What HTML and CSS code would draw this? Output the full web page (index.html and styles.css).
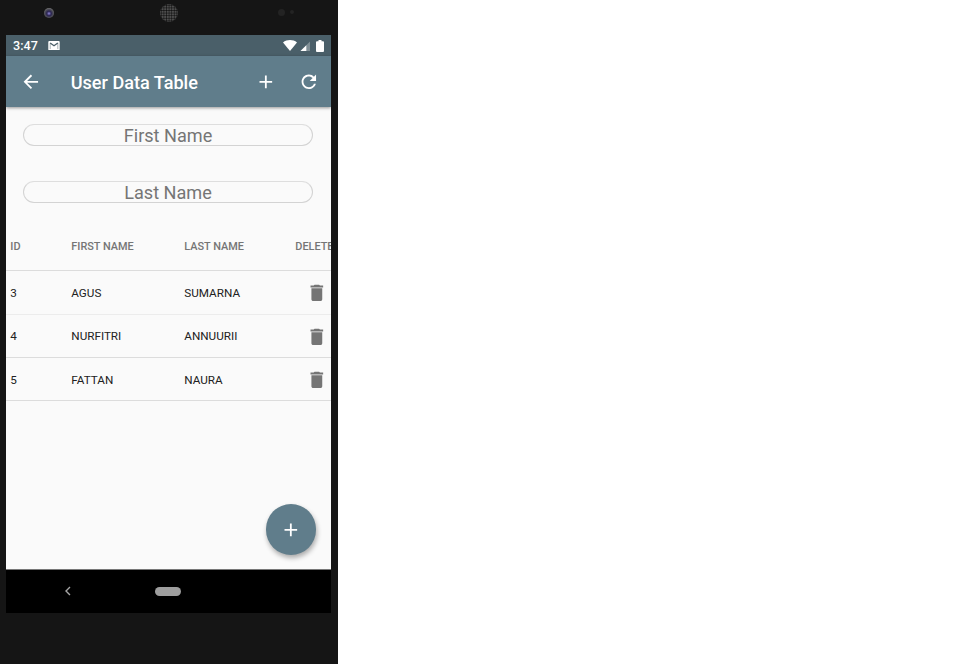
FILE: index.html
```html
<!DOCTYPE html>
<html lang="en">
<head>
<meta charset="utf-8">
<title>User Data Table</title>
<link rel="stylesheet" href="styles.css">
</head>
<body>
<div class="phone">
  <div class="bezel-top">
    <span class="camera"></span>
    <span class="speaker"></span>
    <span class="sensors"><i></i><i></i></span>
  </div>
  <div class="screen">
    <div class="status">
      <span class="time">3:47</span>
      <svg class="mail" viewBox="0 0 12 10"><path fill="#fff" d="M1 0h10a1 1 0 0 1 1 1v8a1 1 0 0 1-1 1H1a1 1 0 0 1-1-1V1a1 1 0 0 1 1-1z"/><path d="M2 2l4 3 4-3" fill="none" stroke="#4a5f69" stroke-width="1.300"/><path d="M2 2v6.500M10 2v6.500" fill="none" stroke="#4a5f69" stroke-width=".5"/></svg>
      <svg class="wifi" viewBox="0 0 14 11"><path fill="#fff" d="M0 2.400C4-.8 10-.8 14 2.400L7 11z"/></svg>
      <svg class="signal" viewBox="0 0 10 10"><path fill="#fff" fill-opacity=".3" d="M0 10 10 0v10z"/><path fill="#fff" d="M0 10 6 4v6z"/></svg>
      <svg class="battery" viewBox="0 0 8 12"><path fill="#fff" d="M2.500 0h3v1.200H7a1 1 0 0 1 1 1V11a1 1 0 0 1-1 1H1a1 1 0 0 1-1-1V2.200a1 1 0 0 1 1-1h1.500z"/></svg>
    </div>
    <header class="appbar">
      <svg class="icon" viewBox="0 0 24 24"><path d="M20 11H7.830l5.590-5.590L12 4l-8 8 8 8 1.410-1.410L7.830 13H20v-2z"/></svg>
      <h1>User Data Table</h1>
      <svg class="icon add" viewBox="0 0 24 24"><path d="M19 13h-6v6h-2v-6H5v-2h6V5h2v6h6v2z"/></svg>
      <svg class="icon" viewBox="0 0 24 24"><path d="M17.650 6.350C16.200 4.900 14.210 4 12 4c-4.420 0-7.990 3.580-7.990 8s3.570 8 7.990 8c3.730 0 6.840-2.550 7.730-6h-2.080c-.82 2.330-3.040 4-5.650 4-3.310 0-6-2.690-6-6s2.690-6 6-6c1.660 0 3.140.69 4.220 1.780L13 11h7V4l-2.350 2.350z"/></svg>
    </header>
    <main>
      <div class="field">First Name</div>
      <div class="field">Last Name</div>
      <div class="table">
        <div class="row head"><span>ID</span><span>FIRST NAME</span><span>LAST NAME</span><span>DELETE</span></div>
        <div class="row light"><span>3</span><span>AGUS</span><span>SUMARNA</span><svg class="trash" viewBox="0 0 24 24"><path d="M6 19c0 1.100.9 2 2 2h8c1.100 0 2-.9 2-2V7H6v12zM19 4h-3.500l-1-1h-5l-1 1H5v2h14V4z"/></svg></div>
        <div class="row"><span>4</span><span>NURFITRI</span><span>ANNUURII</span><svg class="trash" viewBox="0 0 24 24"><path d="M6 19c0 1.100.9 2 2 2h8c1.100 0 2-.9 2-2V7H6v12zM19 4h-3.500l-1-1h-5l-1 1H5v2h14V4z"/></svg></div>
        <div class="row"><span>5</span><span>FATTAN</span><span>NAURA</span><svg class="trash" viewBox="0 0 24 24"><path d="M6 19c0 1.100.9 2 2 2h8c1.100 0 2-.9 2-2V7H6v12zM19 4h-3.500l-1-1h-5l-1 1H5v2h14V4z"/></svg></div>
      </div>
      <div class="fab"><svg class="icon" viewBox="0 0 24 24"><path d="M19 13h-6v6h-2v-6H5v-2h6V5h2v6h6v2z"/></svg></div>
    </main>
    <nav>
      <svg class="back" viewBox="0 0 6 10"><path d="M5 1 1 5l4 4" fill="none" stroke="#a6a6a6" stroke-width="1.400"/></svg>
      <span class="pill"></span>
    </nav>
  </div>
</div>
</body>
</html>
```
FILE: styles.css
```css
body {
  margin: 0;
  background: #fff;
  font-family: Roboto, sans-serif;
}
svg { display: block; flex: none; }
.phone {
  box-sizing: border-box;
  width: 338px;
  height: 664px;
  padding: 0 7px 0 6px;
  background: #151515;
}
.bezel-top {
  display: flex;
  height: 35px;
}
.camera {
  width: 10px;
  height: 10px;
  margin: 8px 0 0 38px;
  border-radius: 50%;
  background: radial-gradient(circle at 50% 55%, #8f86d8 0, #29234f 30%, #55555a 60%, #77777a 75%, #222 100%);
}
.speaker {
  width: 18px;
  height: 18px;
  margin: 4px 0 0 106px;
  border-radius: 50%;
  background: radial-gradient(circle, #111 0.7px, #585858 1.3px) 0 0 / 2.600px 2.600px;
}
.sensors {
  display: flex;
  gap: 5px;
  align-items: center;
  height: 8px;
  margin: 8px 0 0 100px;
}
.sensors i {
  width: 7px;
  height: 7px;
  border-radius: 50%;
  background: #232323;
}
.sensors i + i { width: 4px; height: 4px; }
.screen {
  display: flex;
  flex-direction: column;
  width: 325px;
  height: 578px;
  overflow: hidden;
  background: #fafafa;
}
.status {
  display: flex;
  align-items: center;
  box-sizing: border-box;
  height: 21px;
  padding: 0 7px;
  background: #4a5f69;
  color: #fff;
}
.time {
  width: 35px;
  font-size: 12.600px;
  font-weight: 500;
}
.mail { width: 12px; height: 9.500px; }
.wifi { width: 14px; height: 11px; margin-left: auto; }
.signal { width: 10.500px; height: 10.500px; margin: 1px 6px 0 2.500px; }
.battery { width: 8px; height: 12px; }
.appbar {
  display: flex;
  align-items: center;
  box-sizing: border-box;
  height: 51px;
  padding: 0 11px 0 14px;
  background: #607d8b;
  box-shadow: 0 1px 3px rgba(0, 0, 0, .4);
  color: #fff;
  z-index: 1;
}
.icon { width: 21.670px; height: 21.670px; fill: #fff; }
h1 {
  margin: 2px 0 0 29px;
  font-size: 18.100px;
  font-weight: 500;
  line-height: 22px;
  white-space: nowrap;
}
.appbar > .icon:first-child { margin-left: -0.500px; margin-right: 0.500px; }
.add { margin: 0 21.700px 0 auto; }
main {
  position: relative;
  box-sizing: border-box;
  height: 462px;
  padding-top: 17px;
}
.field {
  display: flex;
  align-items: center;
  justify-content: center;
  box-sizing: border-box;
  width: 290px;
  height: 22px;
  margin: 0 0 35px 17px;
  padding-top: 2px;
  border: 1px solid #d3d3d3;
  border-top-color: #dedede;
  border-radius: 11px;
  color: #757575;
  font-size: 18.100px;
  line-height: 22px;
}
.table { margin-top: -17px; }
.row {
  display: grid;
  grid-template-columns: 61px 113px 111px 50px;
  align-items: center;
  box-sizing: border-box;
  width: 340px;
  height: 43.400px;
  padding: 1.400px 0 0 4.300px;
  border-bottom: 1px solid #dcdcdc;
  color: #212121;
  font-size: 11.700px;
}
.head {
  height: 50.200px;
  color: #757575;
  font-size: 10.900px;
  font-weight: 500;
}
.light { border-color: #ececec; }
.trash { width: 21.670px; height: 21.670px; margin-left: 11px; fill: #757575; }
.fab {
  position: absolute;
  right: 14.700px;
  bottom: 14.200px;
  display: flex;
  align-items: center;
  justify-content: center;
  width: 50.600px;
  height: 50.600px;
  border-radius: 50%;
  background: #607d8b;
  box-shadow: 1px 3px 5px rgba(0, 0, 0, .32);
}
.fab .icon { margin-top: 1px; }
nav {
  display: flex;
  align-items: center;
  box-sizing: border-box;
  height: 44px;
  padding: 0 0 1px 59px;
  border-top: 1px solid #777;
  background: #000;
}
.back { width: 6px; height: 10px; }
.pill {
  width: 26px;
  height: 9px;
  margin-left: 84px;
  border-radius: 5px;
  background: #9e9e9e;
}
```
